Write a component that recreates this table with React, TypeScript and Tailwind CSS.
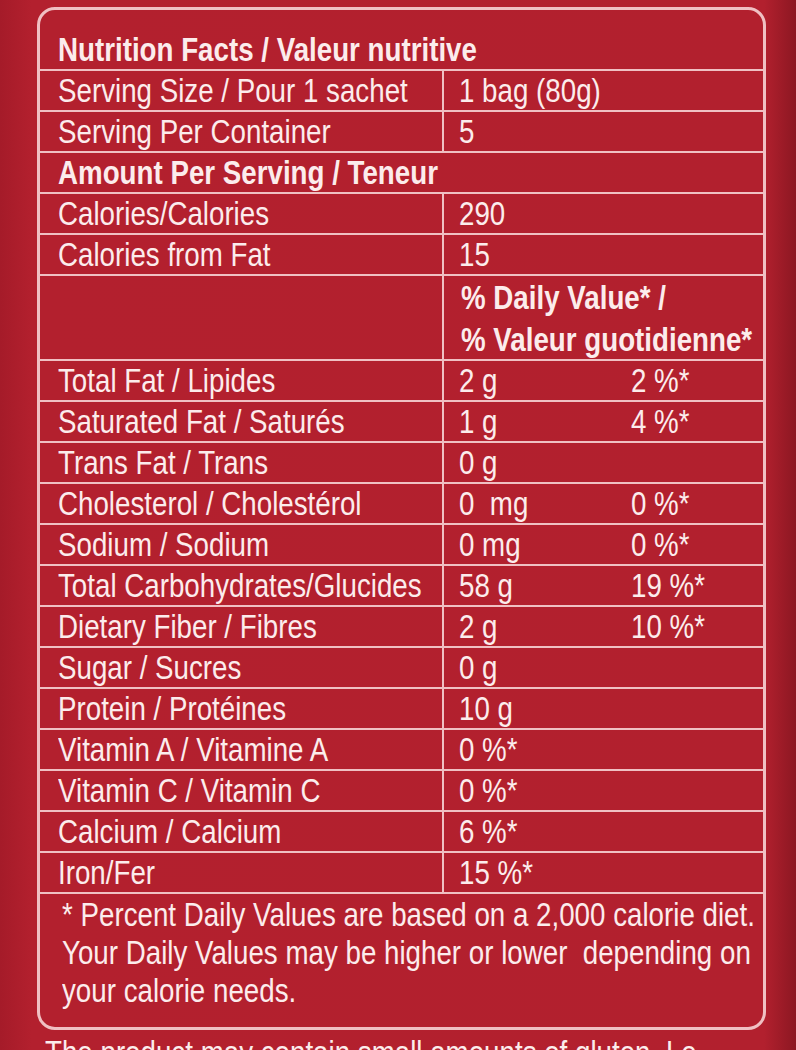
const rows: [string, string, string][] = [
  ["Total Fat / Lipides", "2 g", "2 %*"],
  ["Saturated Fat / Saturés", "1 g", "4 %*"],
  ["Trans Fat / Trans", "0 g", ""],
  ["Cholesterol / Cholestérol", "0  mg", "0 %*"],
  ["Sodium / Sodium", "0 mg", "0 %*"],
  ["Total Carbohydrates/Glucides", "58 g", "19 %*"],
  ["Dietary Fiber / Fibres", "2 g", "10 %*"],
  ["Sugar / Sucres", "0 g", ""],
  ["Protein / Protéines", "10 g", ""],
  ["Vitamin A / Vitamine A", "0 %*", ""],
  ["Vitamin C / Vitamin C", "0 %*", ""],
  ["Calcium / Calcium", "6 %*", ""],
  ["Iron/Fer", "15 %*", ""],
];

// condensed look: Liberation Sans squeezed horizontally
function T({ children }: { children: React.ReactNode }) {
  return <span className="inline-block origin-left scale-x-[0.84] whitespace-pre">{children}</span>;
}

function Row({ label, amount, pct }: { label: string; amount: string; pct?: string }) {
  return (
    <div className="flex h-[41px] border-b-2 border-[#f0c0c3]">
      <div className="flex w-[404px] shrink-0 items-center border-r-2 border-[#f0c0c3] pl-[18px]">
        <T>{label}</T>
      </div>
      <div className="flex min-w-0 flex-1 items-center pl-[15px]">
        <span className="w-[172px] shrink-0">
          <T>{amount}</T>
        </span>
        {pct && <T>{pct}</T>}
      </div>
    </div>
  );
}

export default function App() {
  return (
    <div className="h-[1050px] w-[796px] overflow-hidden bg-[linear-gradient(to_right,#a51b29,#b3202e_4%,#b2202e_96%,#8c1722)] font-['Liberation_Sans',Arial,sans-serif] text-[33px] leading-none text-[#fcecec]">
      <div className="ml-[37px] mt-[7px] flex h-[1023px] w-[729px] flex-col overflow-hidden rounded-[18px] border-[3px] border-[#f0c0c3]">
        {/* heading */}
        <div className="flex h-[61px] shrink-0 items-end border-b-2 border-[#f0c0c3] pb-[3px] pl-[18px] font-bold">
          <T>Nutrition Facts / Valeur nutritive</T>
        </div>
        <Row label="Serving Size / Pour 1 sachet" amount="1 bag (80g)" />
        <Row label="Serving Per Container" amount="5" />
        <div className="flex h-[41px] items-center border-b-2 border-[#f0c0c3] pl-[18px] font-bold">
          <T>Amount Per Serving / Teneur</T>
        </div>
        <Row label="Calories/Calories" amount="290" />
        <Row label="Calories from Fat" amount="15" />
        <div className="flex h-[85px] shrink-0 border-b-2 border-[#f0c0c3]">
          <div className="w-[404px] shrink-0 border-r-2 border-[#f0c0c3]" />
          <div className="flex min-w-0 flex-1 flex-col gap-[9px] pl-[17px] pt-[5px] font-bold">
            <T>% Daily Value* /</T>
            <T>% Valeur guotidienne*</T>
          </div>
        </div>
        {rows.map(([l, a, p]) => (
          <Row key={l} label={l} amount={a} pct={p} />
        ))}
        {/* footnote */}
        <div className="flex flex-col gap-[5px] pl-[22px] pt-[4px]">
          <T>* Percent Daily Values are based on a 2,000 calorie diet.</T>
          <T>Your Daily Values may be higher or lower  depending on</T>
          <T>your calorie needs.</T>
        </div>
      </div>
      <div className="ml-[45px] mt-[6px]">
        <T>The product may contain small amounts of gluten. Le</T>
      </div>
    </div>
  );
}
